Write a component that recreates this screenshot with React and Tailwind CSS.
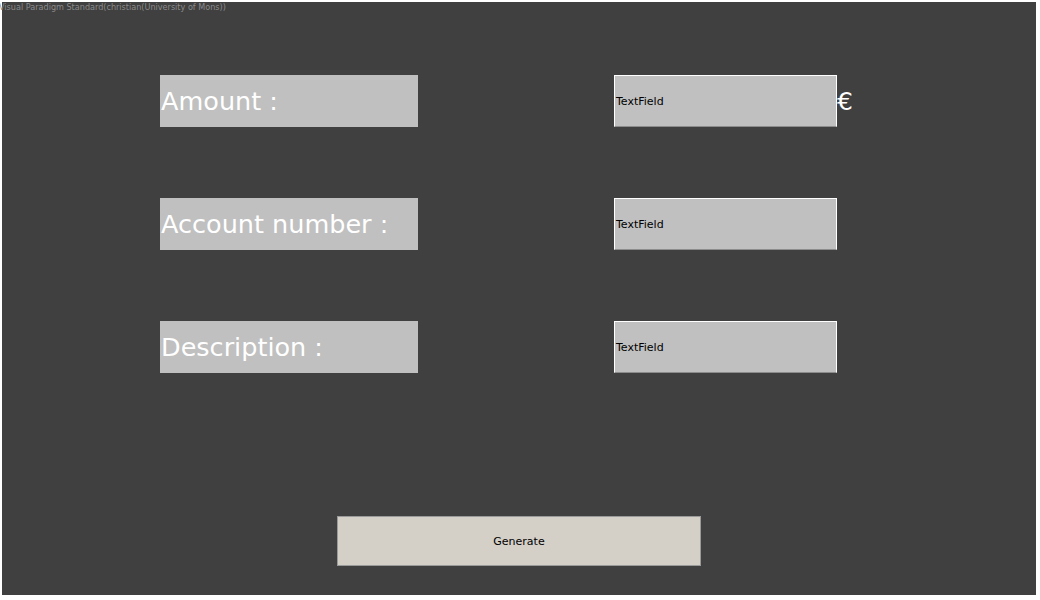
export default function App() {
  const rows = ["Amount :", "Account number :", "Description :"];

  return (
    <div className="w-[1040px] h-[600px] bg-white relative overflow-hidden font-['DejaVu_Sans',sans-serif]">
      {/* watermark */}
      <div className="absolute left-[-1px] top-[2px] text-[8.1px] leading-[11px] text-[#8a8a8a] whitespace-nowrap">
        Visual Paradigm Standard(christian(University of Mons))
      </div>

      <div className="ml-[2px] mt-[2px] w-[1034px] h-[593px] bg-[#404040] pt-[73px] pl-[158px] flex flex-col">
        <div className="flex flex-col gap-[71px]">
          {rows.map((label, i) => (
            <div key={label} className="flex items-center">
              <div className="w-[258px] h-[52px] bg-[#c0c0c0] flex items-center pl-[1px] text-white text-[25.5px]">
                {label}
              </div>
              <div className="ml-[196px] w-[223px] h-[52px] bg-[#c0c0c0] border border-white border-b-[#8c8c8c] flex items-center pl-[1px] pt-[2px] text-[11px] text-black">
                TextField
              </div>
              {i === 0 && <span className="text-white text-[25px] leading-none pt-[1px]">€</span>}
            </div>
          ))}
        </div>

        <button className="mt-[143px] ml-[177px] w-[364px] h-[50px] bg-[#d4d0c8] border border-[#9a9a9a] pt-[2px] text-[11px] text-black">
          Generate
        </button>
      </div>
    </div>
  );
}
